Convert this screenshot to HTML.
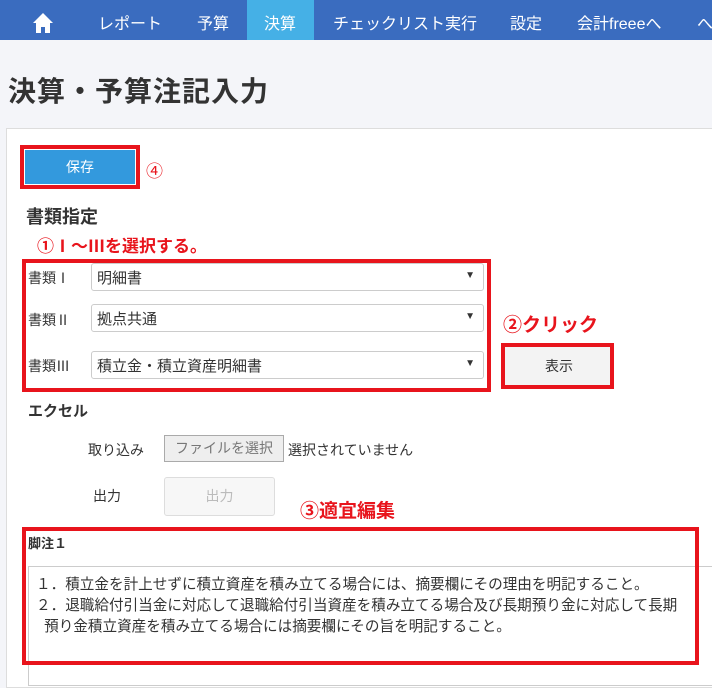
<!DOCTYPE html>
<html><head><meta charset="utf-8"><style>
*{box-sizing:border-box;margin:0;padding:0}
body{width:712px;height:679px;overflow:hidden;background:#f4f5f9;font-family:"Liberation Sans","Noto Sans CJK JP",sans-serif;color:#333;position:relative}
.a{position:absolute;white-space:nowrap}
.nav{position:absolute;left:0;top:0;width:712px;height:40px;background:#3a6cbf}
.nav .a{color:#fff;font-size:16px;top:10px}
.red{color:#e8141c;font-weight:bold}
.rb{position:absolute;border:4px solid #e8141c}
.sel{position:absolute;left:91px;width:393px;height:28px;background:#fff;border:1px solid #ccc;border-radius:3px;font-size:15px;padding:3px 5px}
.sel:after{content:"▼";position:absolute;right:8px;top:6px;font-size:10px}
.lab{font-size:14px}
</style></head><body>
<div class="nav">
<svg class="a" style="left:32px;top:12px" width="22" height="22" viewBox="0 0 22 22"><path d="M11 1L1 11h3v10h5v-6h4v6h5V11h3z" fill="#fff"/></svg>
<div class="a" style="left:98px">レポート</div>
<div class="a" style="left:197px">予算</div>
<div style="position:absolute;left:247px;top:0;width:67px;height:40px;background:#45b0e6"></div>
<div class="a" style="left:264px">決算</div>
<div class="a" style="left:333px">チェックリスト実行</div>
<div class="a" style="left:510px">設定</div>
<div class="a" style="left:577px">会計freeeへ</div>
<div class="a" style="left:697px">へ</div>
</div>
<div class="a" style="left:8px;top:70px;font-size:28px;font-weight:bold;color:#333;letter-spacing:1px">決算・予算注記入力</div>
<div style="position:absolute;left:6px;top:128px;width:720px;height:560px;background:#fff;border:1px solid #ddd"></div>
<div class="rb" style="left:20px;top:145px;width:120px;height:44px"></div>
<div style="position:absolute;left:25px;top:150px;width:110px;height:34px;background:#3399dd;color:#fff;font-size:14px;text-align:center;line-height:34px">保存</div>
<div class="a red" style="left:146px;top:157px;font-size:17px;font-weight:normal">④</div>
<div class="a" style="left:26px;top:203px;font-size:18px;font-weight:bold">書類指定</div>
<div class="a red" style="left:37px;top:232px;font-size:17px">①Ⅰ～Ⅲを選択する。</div>
<div class="rb" style="left:22px;top:259px;width:469px;height:133px"></div>
<div class="a lab" style="left:28px;top:268px">書類Ⅰ</div>
<div class="sel" style="top:263px">明細書</div>
<div class="a lab" style="left:28px;top:310px">書類Ⅱ</div>
<div class="sel" style="top:304px">拠点共通</div>
<div class="a lab" style="left:28px;top:356px">書類Ⅲ</div>
<div class="sel" style="top:351px">積立金・積立資産明細書</div>
<div class="a red" style="left:503px;top:310px;font-size:19px">②クリック</div>
<div class="rb" style="left:501px;top:343px;width:113px;height:46px;background:#f3f3f3"></div>
<div class="a" style="left:545px;top:356px;font-size:14px">表示</div>
<div class="a" style="left:28px;top:400px;font-size:15px;font-weight:bold">エクセル</div>
<div class="a lab" style="left:88px;top:440px">取り込み</div>
<div style="position:absolute;left:164px;top:435px;width:120px;height:27px;background:#eee;border:1px solid #aaa;font-size:14px;color:#777;text-align:center;line-height:25px">ファイルを選択</div>
<div class="a lab" style="left:288px;top:440px">選択されていません</div>
<div class="a lab" style="left:93px;top:486px">出力</div>
<div style="position:absolute;left:164px;top:477px;width:111px;height:39px;background:#f7f7f7;border:1px solid #ddd;border-radius:3px;font-size:14px;color:#bbb;text-align:center;line-height:37px">出力</div>
<div class="a red" style="left:300px;top:496px;font-size:19px">③適宜編集</div>
<div style="position:absolute;left:28px;top:566px;width:700px;height:120px;background:#fff;border:1px solid #ccc"></div>
<div class="rb" style="left:22px;top:527px;width:677px;height:138px"></div>
<div class="a" style="left:28px;top:533px;font-size:13px;font-weight:bold">脚注１</div>
<div class="a" style="left:36px;top:575px;font-size:14.6px;line-height:21px">１．積立金を計上せずに積立資産を積み立てる場合には、摘要欄にその理由を明記すること。<br>２．退職給付引当金に対応して退職給付引当資産を積み立てる場合及び長期預り金に対応して長期<br>&nbsp;&nbsp;預り金積立資産を積み立てる場合には摘要欄にその旨を明記すること。</div>
</body></html>
